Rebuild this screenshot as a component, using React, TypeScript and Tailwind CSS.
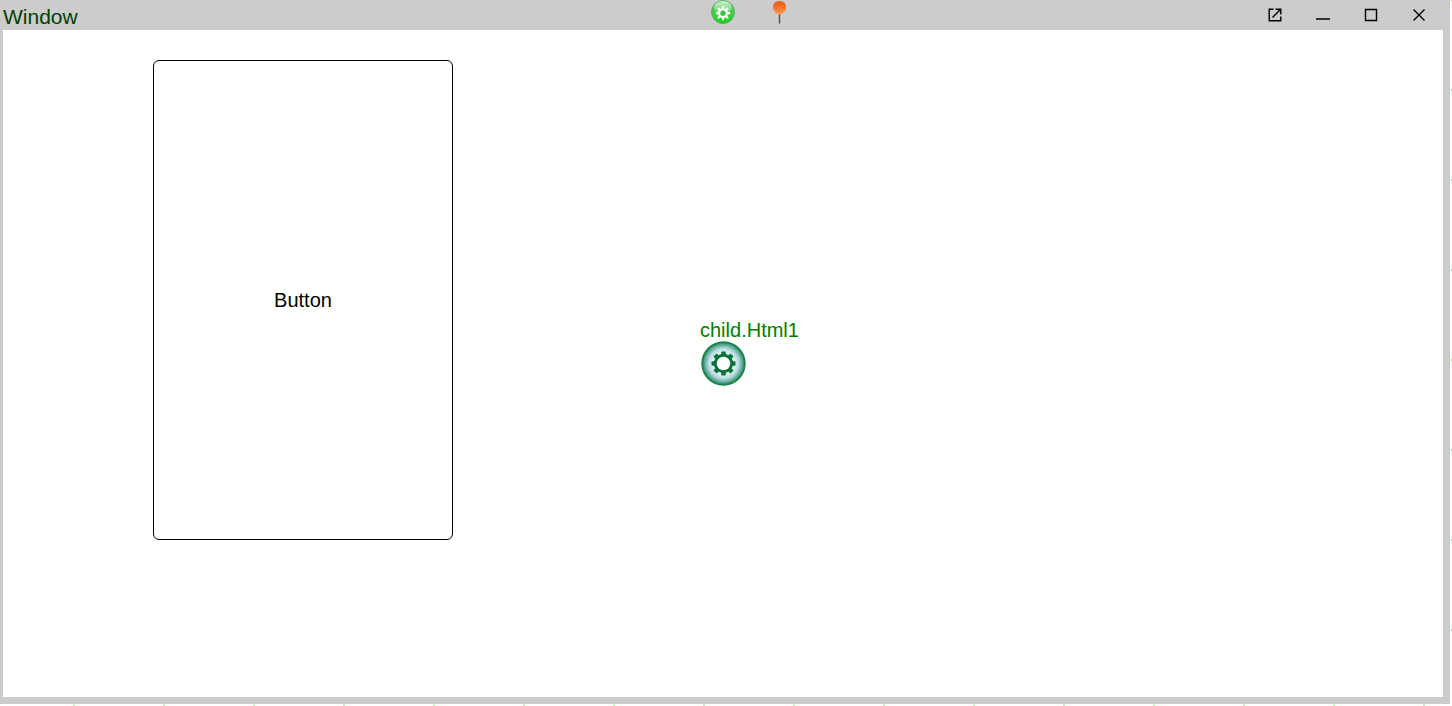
import React from "react";

const marksAcross = Array.from({ length: 22 }, (_, i) => i);
const marksDown = Array.from({ length: 15 }, (_, i) => i);

function Gear({ cx, cy, inner, outer, tooth, color, hole, holeColor }: {
  cx: number; cy: number; inner: number; outer: number; tooth: number; color: string; hole: number; holeColor: string;
}) {
  return (
    <g transform={`translate(${cx} ${cy})`}>
      {[0, 45, 90, 135, 180, 225, 270, 315].map((a) => (
        <rect key={a} x={-tooth / 2} y={-outer} width={tooth} height={outer - inner + 1.5} rx={0.8} fill={color} transform={`rotate(${a})`} />
      ))}
      <circle r={inner} fill={color} />
      <circle r={hole} fill={holeColor} />
    </g>
  );
}

function GreenGear() {
  return (
    <svg width="24" height="24" viewBox="0 0 24 24" aria-hidden="true">
      <defs>
        <radialGradient id="green" cx="50%" cy="85%" r="75%">
          <stop offset="0" stopColor="#14d414" />
          <stop offset="0.6" stopColor="#3fce40" />
          <stop offset="1" stopColor="#62bd66" />
        </radialGradient>
        <linearGradient id="gloss" x1="0" y1="0" x2="0" y2="1">
          <stop offset="0" stopColor="#d5f8d5" stopOpacity="0.9" />
          <stop offset="1" stopColor="#a0eda0" stopOpacity="0.35" />
        </linearGradient>
      </defs>
      <circle cx="12" cy="12" r="11.5" fill="url(#green)" stroke="#54a45a" strokeWidth="0.8" />
      <ellipse cx="12" cy="7.3" rx="9" ry="6.2" fill="url(#gloss)" />
      <Gear cx={12} cy={13.2} inner={5} outer={7.2} tooth={2.4} color="#ffffff" hole={2.7} holeColor="#35c83b" />
    </svg>
  );
}

function Pin() {
  return (
    <svg width="16" height="24" viewBox="0 0 16 24" aria-hidden="true">
      <defs>
        <linearGradient id="pin" x1="0" y1="0" x2="0" y2="1">
          <stop offset="0" stopColor="#ed5710" />
          <stop offset="0.5" stopColor="#f4732b" />
          <stop offset="1" stopColor="#ff9d5c" />
        </linearGradient>
      </defs>
      <path d="M7.5 14V23.5" stroke="#555" strokeWidth="1.5" />
      <path d="M1 7C1 3.2 3.5 1.2 7.5 1.2S14 3.2 14 7C14 11 11 14.4 7.5 14.4S1 11 1 7Z" fill="url(#pin)" />
    </svg>
  );
}

function TealGear() {
  return (
    <svg width="46" height="46" viewBox="0 0 46 46" aria-hidden="true">
      <defs>
        <radialGradient id="teal">
          <stop offset="0" stopColor="#ffffff" />
          <stop offset="0.5" stopColor="#e4f3f5" />
          <stop offset="0.7" stopColor="#b5dbe0" />
          <stop offset="0.88" stopColor="#5da894" />
          <stop offset="1" stopColor="#16804c" />
        </radialGradient>
      </defs>
      <circle cx="23.5" cy="22.5" r="21.4" fill="url(#teal)" stroke="#178345" strokeWidth="1.6" />
      <Gear cx={23.5} cy={22.5} inner={9.7} outer={12} tooth={4.6} color="#087239" hole={6.8} holeColor="#ffffff" />
    </svg>
  );
}

function TitleButton({ label, children }: { label: string; children: React.ReactNode }) {
  return (
    <button aria-label={label} className="flex h-[30px] w-12 items-center justify-center">
      <svg width="14" height="14" viewBox="0 0 14 14" fill="none" stroke="#000" strokeWidth="1.4" aria-hidden="true">
        {children}
      </svg>
    </button>
  );
}

export default function App() {
  return (
    <div className="flex h-screen flex-col overflow-hidden bg-white font-['Liberation_Sans',Arial,sans-serif] text-xl leading-[22px] text-black">
      <div className="flex min-h-0 flex-1">
        <section className="flex min-w-0 flex-1 flex-col bg-[#cccccc] pr-[7px] pb-[7px] pl-[3px]">
          <header className="grid h-[30px] shrink-0 grid-cols-[1fr_auto_1fr]">
            <h1 className="pt-[5px] text-[21px] leading-6 text-[#004000]">Window</h1>
            <div className="flex items-start gap-[37px] pl-[53px]">
              <button aria-label="Settings"><GreenGear /></button>
              <button aria-label="Pin"><Pin /></button>
            </div>
            <div className="flex justify-end">
              <TitleButton label="Open in new window">
                <path d="M5.5 1.2H1.2V12.8H12.8V8.5M7.5 1.2H12.8V6.5M12.4 1.6L4.5 9.5" />
              </TitleButton>
              <TitleButton label="Minimize"><path d="M0 11H14" stroke="#333" strokeWidth="2" /></TitleButton>
              <TitleButton label="Maximize"><path d="M1.5 1.5H12.5V12.5H1.5Z" /></TitleButton>
              <TitleButton label="Close"><path d="M1.5 1.5L12.5 12.5M12.5 1.5L1.5 12.5" /></TitleButton>
            </div>
          </header>
          <main className="grid min-h-0 flex-1 grid-cols-2 bg-white">
            <div className="pt-[30px] pl-[150px]">
              <button className="h-[480px] w-[300px] rounded-md border border-black bg-white">Button</button>
            </div>
            <div className="flex flex-col items-start justify-center pb-[22px]">
              <div className="-ml-[23px]">
                <div className="text-[#008000]">child.Html1</div>
                <button aria-label="Component settings" className="block"><TealGear /></button>
              </div>
            </div>
          </main>
        </section>
        <div className="-mt-px flex w-[2px] shrink-0 flex-col gap-[88px] overflow-hidden" aria-hidden="true">
          {marksDown.map((i) => (
            <span key={i} className="ml-px h-[2px] w-px shrink-0 bg-[#aaddaa]" />
          ))}
        </div>
      </div>
      <div className="flex h-[2px] shrink-0 gap-[88px] overflow-hidden pl-[73px]" aria-hidden="true">
        {marksAcross.map((i) => (
          <span key={i} className="mt-px h-px w-[2px] shrink-0 bg-[#aaddaa]" />
        ))}
      </div>
    </div>
  );
}
